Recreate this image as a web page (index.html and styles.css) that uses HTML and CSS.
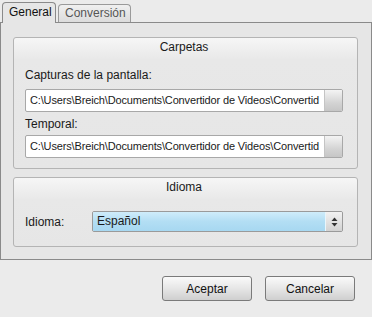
FILE: index.html
```html
<!DOCTYPE html>
<html lang="es">
<head>
    <meta charset="UTF-8">
    <title>Opciones</title>
    <link rel="stylesheet" href="styles.css">
</head>
<body>
    <div class="tabs">
        <div class="tab active">General</div>
        <div class="tab">Conversión</div>
    </div>

    <div class="pane">
        <div class="group folders">
            <div class="group-title">Carpetas</div>

            <label class="field-label">Capturas de la pantalla:</label>
            <div class="path-input">
                <span class="path-text">C:\Users\Breich\Documents\Convertidor de Videos\Convertid</span>
                <span class="path-btn"></span>
            </div>

            <label class="field-label second">Temporal:</label>
            <div class="path-input tight">
                <span class="path-text">C:\Users\Breich\Documents\Convertidor de Videos\Convertid</span>
                <span class="path-btn"></span>
            </div>
        </div>

        <div class="group language">
            <div class="group-title">Idioma</div>
            <div class="lang-row">
                <label class="lang-label">Idioma:</label>
                <div class="combo">
                    <span class="combo-text">Español</span>
                    <span class="combo-arrows">
                        <svg width="7" height="10" viewBox="0 0 7 10">
                            <path d="M3.5 0.5 L6.5 4 L0.5 4 Z" fill="#333"/>
                            <path d="M0.5 6 L6.5 6 L3.5 9.5 Z" fill="#333"/>
                        </svg>
                    </span>
                </div>
            </div>
        </div>
    </div>

    <div class="actions">
        <button class="btn">Aceptar</button>
        <button class="btn">Cancelar</button>
    </div>
</body>
</html>
```

FILE: styles.css
```css
body {
    margin: 0;
    font-family: 'Liberation Sans', Arial, sans-serif;
    font-size: 12px;
    color: #1a1a1a;
    background: #ebebeb;
    width: 372px;
    height: 317px;
    overflow: hidden;
}

.tabs {
    display: flex;
    align-items: flex-end;
    height: 22px;
    padding-left: 2px;
    gap: 2px;
    position: relative;
    z-index: 1;
}

.tab {
    box-sizing: border-box;
    height: 18px;
    padding: 0 6px;
    border: 1px solid #9a9a9a;
    border-bottom: none;
    border-radius: 4px 4px 0 0;
    background: linear-gradient(#f0f0f0, #dcdcdc);
    color: #555;
    line-height: 17px;
    font-size: 12px;
    width: 73px;
    text-align: center;
}

.tab.active {
    height: 21px;
    width: 54px;
    margin-bottom: -1px;
    background: #e6e6e6;
    color: #111;
    line-height: 19px;
    border-color: #8a8a8a;
}

.pane {
    box-sizing: border-box;
    height: 238px;
    border: 1px solid #8a8a8a;
    background: #e6e6e6;
    padding: 14px 13px 12px 12px;
    display: flex;
    flex-direction: column;
    gap: 8px;
}

.group {
    box-sizing: border-box;
    border: 1px solid #b4b4b4;
    border-radius: 3px;
    background: linear-gradient(#f6f6f6 0, #e8e8e8 22px, #e6e6e6 100%);
    padding: 0 14px 0 11px;
}

.folders {
    height: 132px;
}

.language {
    height: 70px;
}

.group-title {
    height: 18px;
    line-height: 18px;
    text-align: center;
}

.field-label {
    display: block;
    margin-top: 12px;
    height: 14px;
    line-height: 14px;
}

.field-label.second {
    margin-top: 5px;
}

.path-input {
    display: flex;
    margin-top: 7px;
    height: 23px;
    box-sizing: border-box;
    border: 1px solid #a8a8a8;
    border-radius: 2px;
    background: #fff;
    overflow: hidden;
}

.path-input.tight {
    margin-top: 4px;
}

.path-text {
    flex: 1;
    white-space: nowrap;
    overflow: hidden;
    padding-left: 4px;
    line-height: 21px;
    font-size: 11px;
    letter-spacing: -0.15px;
}

.path-btn {
    width: 17px;
    border-left: 1px solid #c4c4c4;
    background: linear-gradient(#f4f4f4, #d4d4d4 60%, #c6c6c6);
}

.lang-row {
    display: flex;
    align-items: center;
    margin-top: 15px;
}

.lang-label {
    width: 67px;
}

.combo {
    flex: 1;
    display: flex;
    height: 21px;
    box-sizing: border-box;
    border: 1px solid #9a9a9a;
    border-radius: 2px;
    overflow: hidden;
}

.combo-text {
    flex: 1;
    padding-left: 4px;
    line-height: 19px;
    background: linear-gradient(#cfecfa, #b3def4 50%, #a7d8f1);
    border-right: 1px solid #e8f6fc;
}

.combo-arrows {
    width: 16px;
    display: flex;
    align-items: center;
    justify-content: center;
    background: linear-gradient(#f2f2f2, #d2d2d2);
}

.actions {
    display: flex;
    justify-content: flex-end;
    gap: 13px;
    padding: 16px 17px 0 0;
}

.btn {
    box-sizing: border-box;
    width: 90px;
    height: 25px;
    border: 1px solid #7a7a7a;
    border-radius: 3px;
    background: linear-gradient(#fafafa, #e6e6e6 50%, #cfcfcf);
    font-family: 'Liberation Sans', Arial, sans-serif;
    font-size: 12px;
    color: #111;
    padding: 0;
}
```
